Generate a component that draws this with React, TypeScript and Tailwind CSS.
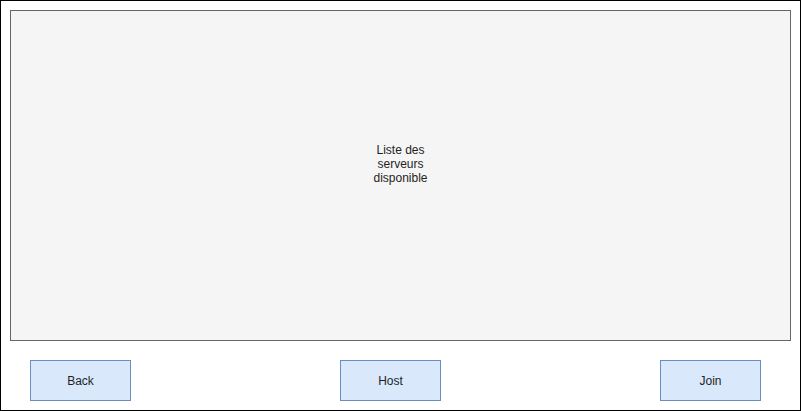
export default function App() {
  const font = { fontFamily: '"Liberation Sans", Arial, sans-serif' };
  return (
    <div
      className="w-[801px] h-[411px] bg-white border border-black box-border flex flex-col pl-[9px] pt-[9px] text-[12px] leading-[14px] text-[#1f1f1f]"
      style={font}
    >
      <div className="w-[781px] h-[331px] bg-[#f5f5f5] border border-[#666666] flex items-center justify-center pb-[24px]">
        <div className="w-[70px] text-center">Liste des serveurs disponible</div>
      </div>
      <div className="flex mt-[19px] pl-[20px]">
        <button className="w-[101px] h-[41px] bg-[#dae8fc] border border-[#6c8ebf] text-center">Back</button>
        <button className="ml-[209px] w-[101px] h-[41px] bg-[#dae8fc] border border-[#6c8ebf] text-center">Host</button>
        <button className="ml-[219px] w-[101px] h-[41px] bg-[#dae8fc] border border-[#6c8ebf] text-center">Join</button>
      </div>
    </div>
  );
}
